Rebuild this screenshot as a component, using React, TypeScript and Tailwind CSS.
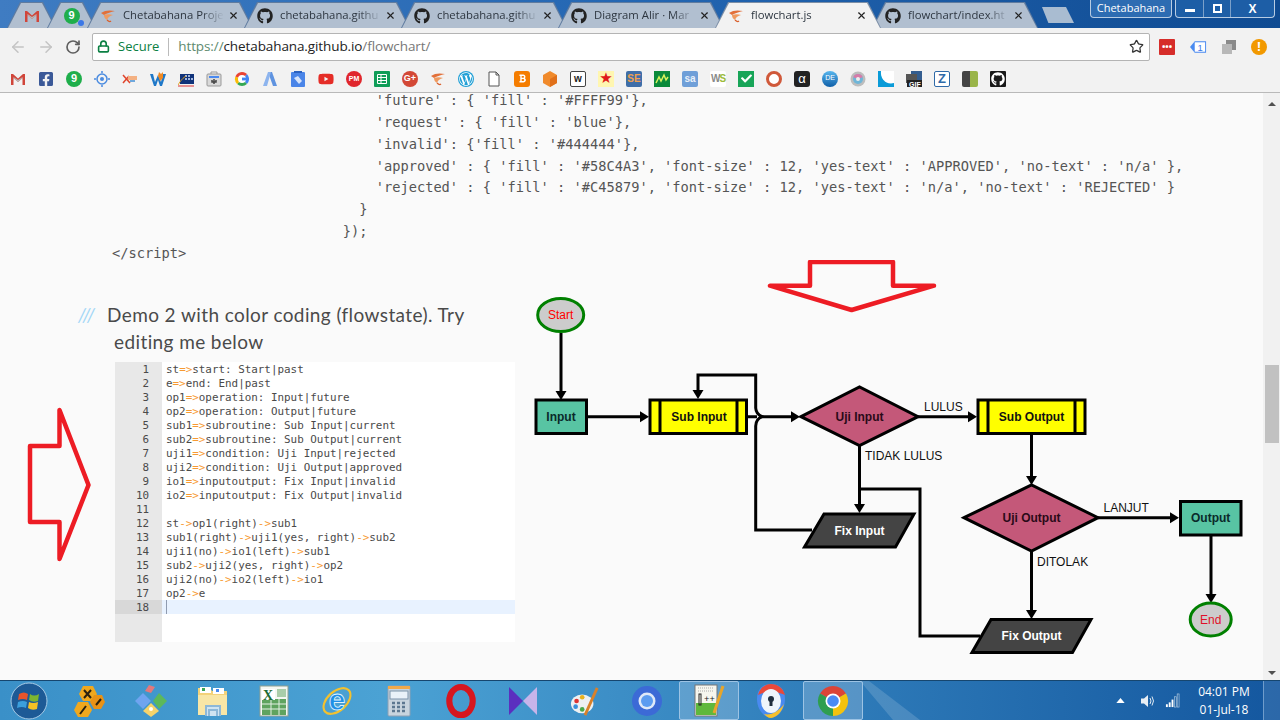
import type { ReactNode } from "react";
import { ArrowLeft, ArrowRight, RotateCw, Star, Lock, X } from "lucide-react";
import { FaGithub, FaFacebookSquare, FaWordpressSimple, FaYoutube, FaBold, FaCheck } from "react-icons/fa";

const SANS = "font-['Open_Sans','Noto_Sans',sans-serif]";

function sector(cx: number, cy: number, r: number, a0: number, a1: number) {
  const rad = (a: number) => (a * Math.PI) / 180;
  const x0 = cx + r * Math.cos(rad(a0));
  const y0 = cy + r * Math.sin(rad(a0));
  const x1 = cx + r * Math.cos(rad(a1));
  const y1 = cy + r * Math.sin(rad(a1));
  return `M${cx} ${cy} L${x0} ${y0} A${r} ${r} 0 0 1 ${x1} ${y1} Z`;
}

function Shrimp() {
  return (
    <svg viewBox="0 0 16 16" className="w-4 h-4 shrink-0">
      <path d="M1 5 C5 2 10 2 15 3 C11 4 7 5 4 7 Z" fill="#e2703a" />
      <path d="M4 7 C7 6 10 6 13 7 C10 8 8 9 7 12 C5 11 4 9 4 7 Z" fill="#ef9a5f" />
      <path d="M7 12 C8 13 10 14 11 13" stroke="#d9602c" fill="none" strokeWidth="1.2" />
    </svg>
  );
}

function GmailM({ size = 16 }: { size?: number }) {
  return (
    <svg viewBox="0 0 16 16" width={size} height={size} className="shrink-0">
      <path d="M1 3 H3 L8 7.5 L13 3 H15 V14 H12.5 V7 L8 11 L3.5 7 V14 H1 Z" fill="#d0453a" />
      <path d="M3.5 7 L8 11 L12.5 7 V6 L8 9 L3.5 6 Z" fill="#b9b9b9" />
    </svg>
  );
}

function WaIcon({ size = 16 }: { size?: number }) {
  return (
    <span
      style={{ width: size, height: size }}
      className="flex items-center justify-center shrink-0 rounded-full bg-[#1fae4b] text-white text-[11px] font-bold font-['Liberation_Sans',sans-serif] leading-none"
    >
      9
    </span>
  );
}

function Letter({ bg, color, children, cls = "" }: { bg: string; color: string; children: ReactNode; cls?: string }) {
  return (
    <span
      style={{ background: bg, color }}
      className={`flex items-center justify-center w-4 h-4 rounded-[2px] text-[10px] font-bold leading-none font-['Liberation_Sans',sans-serif] ${cls}`}
    >
      {children}
    </span>
  );
}

function Tab({ icon, title, active = false, pinned = false }: { icon: ReactNode; title?: string; active?: boolean; pinned?: boolean }) {
  const clip = "[clip-path:polygon(0_100%,13px_0,calc(100%-13px)_0,100%_100%)]";
  return (
    <div className={`relative h-[26px] -mr-[9px] ${pinned ? "w-[49px]" : "w-[166px]"} ${active ? "z-10 bg-[#7d8fa6]" : "bg-[#5f7b9f]"} ${clip}`}>
      <div className={`absolute inset-x-[1px] top-[1px] bottom-0 flex items-center ${active ? "bg-[#f2f2f2]" : "bg-[#b1bfd0]"} ${clip}`}>
        {pinned ? (
          <div className="mx-auto flex">{icon}</div>
        ) : (
          <>
            <div className="ml-[12px] flex">{icon}</div>
            <div className="ml-[7px] w-[101px] overflow-hidden whitespace-nowrap text-[11.3px] text-[#2d3640] [mask-image:linear-gradient(to_right,black_78%,transparent)]">
              {title}
            </div>
            <X size={11} strokeWidth={2.5} className="ml-[4px] text-[#222]" />
          </>
        )}
      </div>
    </div>
  );
}

const gh = <FaGithub size={16} className="text-[#222]" />;

function TabBar() {
  return (
    <div className={`relative h-[28px] pt-[2px] pl-[7px] flex bg-gradient-to-r from-[#3f7cc2] via-[#2366b2] to-[#0f4b92] ${SANS}`}>
      <Tab pinned icon={<GmailM />} />
      <Tab pinned icon={<span className="relative"><WaIcon /><span className="absolute -right-1 -bottom-0.5 w-[6px] h-[6px] rounded-full bg-[#3b78e7]" /></span>} />
      <Tab icon={<Shrimp />} title="Chetabahana Proje" />
      <Tab icon={gh} title="chetabahana.githu" />
      <Tab icon={gh} title="chetabahana.githu" />
      <Tab icon={gh} title="Diagram Alir · Mar" />
      <Tab active icon={<Shrimp />} title="flowchart.js" />
      <Tab icon={gh} title="flowchart/index.ht" />
      <div className="ml-[13px] mt-[5px] w-[32px] h-[16px] bg-[#a9bcd1] [clip-path:polygon(0_0,75%_0,100%_100%,20%_100%)]" />
      <div className="ml-auto flex h-[18px] -mt-[2px] mr-[5px] text-white">
        <div className="w-[82px] flex items-center justify-center border border-t-0 border-[#b7cce3] rounded-b-[4px] bg-[#2d6cb2] text-[11px]">Chetabahana</div>
        <div className="ml-[3px] flex border border-t-0 border-[#b7cce3] rounded-b-[4px] bg-[#1d5ea6]">
          <div className="w-[28px] flex items-center justify-center border-r border-[#7ba0c9]"><span className="w-[10px] h-[3px] mt-[3px] bg-white" /></div>
          <div className="w-[27px] flex items-center justify-center border-r border-[#7ba0c9]"><span className="w-[9px] h-[9px] border-2 border-white" /></div>
          <div className="w-[43px] flex items-center justify-center text-[12px] font-bold font-['Liberation_Sans',sans-serif]">X</div>
        </div>
      </div>
    </div>
  );
}

function AddressBar() {
  return (
    <div className={`h-[37px] flex items-center bg-[#f2f2f2] ${SANS}`}>
      <ArrowLeft size={18} className="ml-[9px] text-[#c4c4c4]" />
      <ArrowRight size={18} className="ml-[10px] text-[#c4c4c4]" />
      <RotateCw size={16} strokeWidth={2.5} className="ml-[10px] text-[#5f5f5f]" />
      <div className="ml-[11px] w-[1058px] h-[28px] flex items-center bg-white border border-[#b4b4b4] rounded-[2px]">
        <Lock size={13} strokeWidth={3} className="ml-[4px] text-[#0b8043]" />
        <span className="ml-[8px] text-[13px] text-[#0b8043]">Secure</span>
        <span className="ml-[9px] w-px h-[18px] bg-[#bbb]" />
        <span className="ml-[9px] text-[13.5px] tracking-[-0.1px]">
          <span className="text-[#5d8a6e]">https://</span>
          <span className="text-[#222]">chetabahana.github.io</span>
          <span className="text-[#777]">/flowchart/</span>
        </span>
        <Star size={15} strokeWidth={2} className="ml-auto mr-[5px] text-[#333]" />
      </div>
      <div className="ml-[9px] w-[16px] h-[16px] bg-[#d62d2a] rounded-[1px] flex items-center justify-center text-white text-[9px] font-bold leading-none">•••</div>
      <svg viewBox="0 0 18 16" className="ml-[15px] w-[17px] h-[16px]">
        <path d="M0 8 L5 2 H17 V14 H5 Z" fill="#4a8af0" />
        <rect x="5" y="3" width="11" height="10" fill="#fff" />
        <text x="8" y="12" fontSize="10" fill="#3b78e7" fontFamily="Liberation Sans">1</text>
      </svg>
      <svg viewBox="0 0 16 16" className="ml-[14px] w-4 h-4">
        <rect x="5" y="1" width="10" height="10" fill="#8a8a8a" />
        <rect x="1" y="5" width="10" height="10" fill="#b8b8b8" />
      </svg>
      <div className="ml-[14px] w-[16px] h-[16px] rounded-full bg-[#f29900] flex items-center justify-center text-white text-[12px] font-bold leading-none">!</div>
    </div>
  );
}

function Bookmarks() {
  const g = (
    <svg viewBox="0 0 16 16" className="w-4 h-4">
      <path d={sector(8, 8, 7, -45, 45)} fill="#4285f4" />
      <path d={sector(8, 8, 7, 45, 135)} fill="#34a853" />
      <path d={sector(8, 8, 7, 135, 200)} fill="#fbbc05" />
      <path d={sector(8, 8, 7, 200, 315)} fill="#ea4335" />
      <circle cx="8" cy="8" r="4" fill="#fff" />
      <rect x="8" y="6.6" width="7" height="2.8" fill="#4285f4" />
    </svg>
  );
  const items: ReactNode[] = [
    <GmailM />,
    <FaFacebookSquare size={16} className="text-[#3b5998]" />,
    <WaIcon />,
    <svg viewBox="0 0 16 16" className="w-4 h-4"><circle cx="8" cy="8" r="5" fill="none" stroke="#4a8be0" strokeWidth="1.5" /><circle cx="8" cy="8" r="2" fill="#4a8be0" /><path d="M0 8h2M14 8h2M8 0v2M8 14v2" stroke="#4a8be0" strokeWidth="1.5" /></svg>,
    <svg viewBox="0 0 16 16" className="w-4 h-4"><path d="M1 4 L8 12 M1 12 L7 5" stroke="#e0452c" strokeWidth="1.5" /><rect x="6" y="5" width="9" height="4" fill="#f4b183" /><rect x="8" y="9" width="5" height="2" fill="#6fa8dc" /></svg>,
    <svg viewBox="0 0 16 16" className="w-4 h-4"><path d="M0 3 L3 3 L5 11 L8 4 L11 11 L13 3 L16 3 L12 15 L10 15 L8 9 L6 15 L4 15 Z" fill="#1f78c8" /><path d="M8 5 L9 1 L11 3 L13 1 L13 7 L10 10 Z" fill="#f08a24" /></svg>,
    <svg viewBox="0 0 16 16" className="w-4 h-4"><rect x="2" y="3" width="14" height="10" fill="#10337a" /><path d="M7 5h2M10 5h2M7 8h2M10 8h2M13 8h2" stroke="#cfe2ff" strokeWidth="1.5" /><path d="M0 14 C3 9 5 7 8 5" stroke="#e0a020" fill="none" /><path d="M0 15 H16" stroke="#d33" /></svg>,
    <svg viewBox="0 0 16 16" className="w-4 h-4"><path d="M5 3 V1 H11 V3" fill="none" stroke="#999" /><rect x="1" y="3" width="14" height="12" rx="1" fill="#d9d9d9" stroke="#999" /><rect x="3" y="5" width="10" height="2" fill="#4a8af0" /><path d="M8 8 V13 M6 9 V11 H10 V9" stroke="#444" strokeWidth="1.5" fill="none" /></svg>,
    g,
    <svg viewBox="0 0 16 16" className="w-4 h-4"><path d="M6 1 H10 L15 15 H11 Z" fill="#5f93e0" /><path d="M6 1 H9 L5 15 H1 Z" fill="#8db4ee" /></svg>,
    <svg viewBox="0 0 16 16" className="w-4 h-4"><rect x="1" y="1" width="14" height="15" rx="1" fill="#4a85e8" /><rect x="4" y="0" width="8" height="2" fill="#2b62c0" /><path d="M4 7 L8 5 L12 10 L9 13 Z" fill="#d6e4fb" /></svg>,
    <FaYoutube size={16} className="text-[#e52d27]" />,
    <span className="w-4 h-4 rounded-full bg-[#e0262c] text-white text-[7px] font-bold flex items-center justify-center leading-none font-['Liberation_Sans',sans-serif]">PM</span>,
    <svg viewBox="0 0 16 16" className="w-4 h-4"><rect width="16" height="16" rx="1" fill="#0f9d58" /><path d="M3.5 3.5 H12.5 V12.5 H3.5 Z M3.5 6.5 H12.5 M3.5 9.5 H12.5 M7 3.5 V12.5" stroke="#fff" fill="none" /></svg>,
    <span className="w-4 h-4 rounded-full bg-[#d34836] text-white text-[9px] font-bold flex items-center justify-center leading-none font-['Liberation_Sans',sans-serif]">G+</span>,
    <Shrimp />,
    <span className="w-4 h-4 rounded-full bg-[#21a0d6] flex items-center justify-center"><FaWordpressSimple size={14} className="text-white" /></span>,
    <svg viewBox="0 0 16 16" className="w-4 h-4"><path d="M3 1 H10 L13 4 V15 H3 Z M10 1 V4 H13" fill="#fff" stroke="#555" /></svg>,
    <span className="w-4 h-4 rounded-[3px] bg-[#f57d00] flex items-center justify-center"><FaBold size={9} className="text-white" /></span>,
    <svg viewBox="0 0 16 16" className="w-4 h-4"><path d="M8 0 L15 4 V12 L8 16 L1 12 V4 Z" fill="#f08a2b" /><path d="M8 8 L15 4 V12 L8 16 Z" fill="#e0701a" /></svg>,
    <Letter bg="#fff" color="#222" cls="border border-[#444]">w</Letter>,
    <span className="w-4 h-4 bg-[#fff6b0] flex items-center justify-center text-[#e01b1b] text-[15px] leading-none font-['DejaVu_Sans',sans-serif]">★</span>,
    <Letter bg="#3f6ea8" color="#f0a050">SE</Letter>,
    <svg viewBox="0 0 16 16" className="w-4 h-4"><rect width="16" height="16" fill="#0a8a3a" /><path d="M2 12 L5 6 L7 10 L10 4 L12 9 L14 6" stroke="#d7f25c" fill="none" strokeWidth="1.5" /></svg>,
    <Letter bg="#6f9fd8" color="#e8f0fa">sa</Letter>,
    <Letter bg="#fff" color="#8a8a8a" cls="tracking-[-1px]"><span>W</span><span className="text-[#9bbb3a]">S</span></Letter>,
    <span className="w-4 h-4 bg-[#18a558] flex items-center justify-center"><FaCheck size={11} className="text-white" /></span>,
    <span className="w-4 h-4 rounded-full border-[3px] border-[#d0593a] bg-white" />,
    <Letter bg="#222" color="#fff" cls="!text-[13px] !font-normal rounded-[3px]">α</Letter>,
    <span className="w-4 h-4 rounded-full bg-gradient-to-b from-[#58b7ee] to-[#0d5fa8] text-white text-[7px] flex items-center justify-center font-['Liberation_Sans',sans-serif]">DE</span>,
    <svg viewBox="0 0 16 16" className="w-4 h-4"><circle cx="8" cy="8" r="7.5" fill="#bdbdbd" /><circle cx="8" cy="8" r="5" fill="#6fb6d8" /><path d={sector(8, 8, 5, 200, 340)} fill="#d77ba8" /><circle cx="8" cy="8" r="2" fill="#eee" /></svg>,
    <svg viewBox="0 0 16 16" className="w-4 h-4"><rect width="16" height="16" fill="#0a9bd8" /><path d="M3 0 C2 8 8 14 16 12 V0 Z" fill="#fff" /></svg>,
    <svg viewBox="0 0 16 16" className="w-4 h-4"><rect x="5" y="0" width="11" height="9" fill="#335d8f" /><rect x="0" y="3" width="11" height="9" fill="#555" /><rect x="1" y="9" width="15" height="7" fill="#222" /><text x="3" y="15.5" fontSize="7" fontWeight="bold" fill="#fff" fontFamily="Liberation Sans">GIF</text></svg>,
    <Letter bg="#fff" color="#2f6aa8" cls="border border-[#2f6aa8] !text-[13px]">Z</Letter>,
    <span className="w-4 h-4 rounded-[2px] bg-gradient-to-r from-[#444] from-50% to-[#9ab54a] to-50%" />,
    <span className="w-4 h-4 bg-[#1a1a1a] rounded-[1px] flex items-center justify-center"><FaGithub size={14} className="text-white" /></span>,
  ];
  return (
    <div className="h-[28px] flex items-center gap-3 pl-[10px] bg-[#f2f2f2] border-b border-[#b9b9b9]">
      {items.map((item, i) => (
        <div key={i} className="w-4 h-4 flex items-center justify-center">{item}</div>
      ))}
    </div>
  );
}

const topCode = `                                'future' : { 'fill' : '#FFFF99'},
                                'request' : { 'fill' : 'blue'},
                                'invalid': {'fill' : '#444444'},
                                'approved' : { 'fill' : '#58C4A3', 'font-size' : 12, 'yes-text' : 'APPROVED', 'no-text' : 'n/a' },
                                'rejected' : { 'fill' : '#C45879', 'font-size' : 12, 'yes-text' : 'n/a', 'no-text' : 'REJECTED' }
                              }
                            });
</script>`;

const editorLines = [
  "st=>start: Start|past",
  "e=>end: End|past",
  "op1=>operation: Input|future",
  "op2=>operation: Output|future",
  "sub1=>subroutine: Sub Input|current",
  "sub2=>subroutine: Sub Output|current",
  "uji1=>condition: Uji Input|rejected",
  "uji2=>condition: Uji Output|approved",
  "io1=>inputoutput: Fix Input|invalid",
  "io2=>inputoutput: Fix Output|invalid",
  "",
  "st->op1(right)->sub1",
  "sub1(right)->uji1(yes, right)->sub2",
  "uji1(no)->io1(left)->sub1",
  "sub2->uji2(yes, right)->op2",
  "uji2(no)->io2(left)->io1",
  "op2->e",
  "",
];

function Editor() {
  return (
    <div className="ml-[37px] w-[400px] h-[280px] flex bg-white font-['DejaVu_Sans_Mono',monospace] text-[10.9px] leading-[16px] text-[#4a4a4a]">
      <div className="w-[47px] bg-[#e8e8e8] text-right">
        {editorLines.map((_, i) => (
          <div key={i} className={`pr-[13px] h-[14px] ${i === 17 ? "bg-[#d8d8d8]" : ""}`}>{i + 1}</div>
        ))}
      </div>
      <div className="flex-1">
        {editorLines.map((line, i) => (
          <div key={i} className={`pl-[4px] h-[14px] whitespace-pre ${i === 17 ? "bg-[#e8f2ff]" : ""}`}>
            {i === 17 && <div className="w-px h-[14px] bg-[#8f9bb0]" />}
            {line.split(/(=>|->)/).map((part, j) =>
              part === "=>" || part === "->" ? <span key={j} className="text-[#f79a32]">{part}</span> : part
            )}
          </div>
        ))}
      </div>
    </div>
  );
}

function HeadR({ x, y }: { x: number; y: number }) {
  return <polygon points={`${x - 9},${y - 5.5} ${x},${y} ${x - 9},${y + 5.5}`} fill="#000" />;
}

function HeadD({ x, y }: { x: number; y: number }) {
  return <polygon points={`${x - 5.5},${y - 9} ${x},${y} ${x + 5.5},${y - 9}`} fill="#000" />;
}

function Flowchart() {
  const node = { fontSize: 12, textAnchor: "middle" as const, dominantBaseline: "central" as const, fontWeight: 700 };
  const label = { fontSize: 12, fill: "#111" };
  const line = { stroke: "#000", strokeWidth: 3, fill: "none" };
  return (
    <svg viewBox="525 293 730 387" className="w-[730px] h-[387px] shrink-0 font-['Liberation_Sans',sans-serif]">
      <path d="M561 333 V392" {...line} />
      <HeadD x={561} y={400} />
      <path d="M587 416.7 H640" {...line} />
      <HeadR x={649} y={416.7} />
      <path d="M747 416.7 H757 M761 416.7 H792" {...line} />
      <HeadR x={800} y={416.7} />
      <path d="M698 391 V375 H755.7 V408 Q756 414 762 416.7 Q756 419 755.7 426 V530 H812" {...line} />
      <HeadD x={698} y={399} />
      <path d="M918 416.7 H968" {...line} />
      <HeadR x={977} y={416.7} />
      <path d="M859.5 446 V504" {...line} />
      <HeadD x={859.5} y={513} />
      <path d="M860 489 H920 V636 H980" {...line} />
      <path d="M1031.5 434 V476" {...line} />
      <HeadD x={1031.5} y={485} />
      <path d="M1098 517.7 H1170" {...line} />
      <HeadR x={1179} y={517.7} />
      <path d="M1031.5 551 V610" {...line} />
      <HeadD x={1031.5} y={619} />
      <path d="M1211 536 V594" {...line} />
      <HeadD x={1211} y={603} />

      <ellipse cx={560.7} cy={315} rx={23} ry={16.5} fill="#ccc" stroke="#008000" strokeWidth={3} />
      <text x={560.7} y={315} fontSize={12} textAnchor="middle" dominantBaseline="central" fill="#ff0000">Start</text>

      <rect x={536} y={400} width={50.5} height={33.5} fill="#58C4A3" stroke="#000" strokeWidth={3} />
      <text x={561} y={416.7} {...node} fill="#0a2a2a">Input</text>

      <rect x={650} y={400} width={96.5} height={33.5} fill="#ffff00" stroke="#000" strokeWidth={3} />
      <path d="M660 400 V433.5 M737 400 V433.5" stroke="#000" strokeWidth={3} />
      <text x={699} y={416.7} {...node} fill="#111">Sub Input</text>

      <polygon points="801,416.7 859.5,387 918,416.7 859.5,445.7" fill="#C45879" stroke="#000" strokeWidth={3} />
      <text x={859.5} y={416.7} {...node} fill="#2a0a18">Uji Input</text>

      <rect x={978} y={400} width={107} height={33.5} fill="#ffff00" stroke="#000" strokeWidth={3} />
      <path d="M988 400 V433.5 M1075 400 V433.5" stroke="#000" strokeWidth={3} />
      <text x={1031.5} y={416.7} {...node} fill="#111">Sub Output</text>

      <polygon points="964,517.7 1031.5,485 1098,517.7 1031.5,551" fill="#C45879" stroke="#000" strokeWidth={3} />
      <text x={1031.5} y={517.7} {...node} fill="#2a0a18">Uji Output</text>

      <rect x={1180.5} y={501.5} width={60.5} height={33.5} fill="#58C4A3" stroke="#000" strokeWidth={3} />
      <text x={1210.7} y={517.7} {...node} fill="#0a2a2a">Output</text>

      <polygon points="824,514 914,514 895.5,547 804.5,547" fill="#444444" stroke="#000" strokeWidth={3} />
      <text x={859.5} y={530.5} {...node} fill="#fff">Fix Input</text>

      <polygon points="991,619.5 1091,619.5 1072.5,652.5 972,652.5" fill="#444444" stroke="#000" strokeWidth={3} />
      <text x={1031.5} y={636} {...node} fill="#fff">Fix Output</text>

      <ellipse cx={1210.7} cy={619.5} rx={20.5} ry={16.5} fill="#ccc" stroke="#008000" strokeWidth={3} />
      <text x={1210.7} y={619.5} fontSize={12} textAnchor="middle" dominantBaseline="central" fill="#e0102a">End</text>

      <text x={924} y={411} {...label}>LULUS</text>
      <text x={865} y={459.5} {...label}>TIDAK LULUS</text>
      <text x={1103.5} y={512} {...label}>LANJUT</text>
      <text x={1037} y={566} {...label}>DITOLAK</text>
    </svg>
  );
}

function ScrollBar() {
  return (
    <div className="absolute right-0 inset-y-0 w-[17px] bg-[#f1f1f1] flex flex-col items-center">
      <div className="mt-[9px] w-0 h-0 border-x-[4px] border-x-transparent border-b-[4px] border-b-[#505050]" />
      <div className="mt-[259px] w-[14px] h-[78px] bg-[#c1c1c1]" />
      <div className="mt-auto mb-[5px] w-0 h-0 border-x-[4px] border-x-transparent border-t-[4px] border-t-[#505050]" />
    </div>
  );
}

function Page() {
  return (
    <div className="relative h-[587px] overflow-hidden bg-[#fafafa]">
      <pre className="-mt-[3px] pl-[112px] h-[175px] font-['DejaVu_Sans_Mono',monospace] text-[13.7px] leading-[21.85px] text-[#555]">{topCode}</pre>
      <div className="mt-[28px] flex">
        <div className="ml-[78px] w-[447px] shrink-0">
          <div className="pt-[8px] h-[69px] pl-[36px] -indent-[36px] text-[19px] leading-[27px] text-[#4a4a4a] font-['Lato',sans-serif] tracking-[0.4px]">
            <span className="inline-block indent-0 w-[29px] text-[#a3d7f7] italic">///</span>
            Demo 2 with color coding (flowstate). Try
            <br />
            editing me below
          </div>
          <Editor />
        </div>
        <Flowchart />
      </div>
      <svg viewBox="0 0 100 160" className="absolute left-0 top-[314px] w-[100px] h-[160px]">
        <polygon points="59.5,3 59.5,39 30,39 30,115 59.5,115 59.5,152 88.5,78" fill="none" stroke="#ed1c24" strokeWidth={4.5} strokeLinejoin="round" />
      </svg>
      <svg viewBox="760 260 180 55" className="absolute left-[760px] top-[167px] w-[180px] h-[55px]">
        <polygon points="810,262 893,262 893,285.7 934,285.7 851.6,310 770,285.7 810,285.7" fill="none" stroke="#ed1c24" strokeWidth={4.5} strokeLinejoin="round" />
      </svg>
      <ScrollBar />
    </div>
  );
}

function Slot({ children, active = false }: { children: ReactNode; active?: boolean }) {
  return (
    <div className={`w-[62px] flex items-center justify-center ${active ? "relative" : ""}`}>
      {active && <div className="absolute inset-y-[0px] inset-x-[1px] border border-[#9cc3e4] rounded-[2px] bg-white/20" />}
      <div className="relative flex">{children}</div>
    </div>
  );
}

function Taskbar() {
  const chrome = (
    <svg viewBox="0 0 32 32" className="w-[32px] h-[32px]">
      <path d={sector(16, 16, 15, -150, -30)} fill="#db4437" />
      <path d={sector(16, 16, 15, 90, 210)} fill="#2e9e4f" />
      <path d={sector(16, 16, 15, -30, 90)} fill="#f4c20d" />
      <circle cx="16" cy="16" r="7.5" fill="#fff" />
      <circle cx="16" cy="16" r="5.8" fill="#4a8af4" />
    </svg>
  );
  return (
    <div className={`relative h-[40px] overflow-hidden flex border-t border-[#16466f] bg-gradient-to-r from-[#3a90c8] via-[#4ba2d4] via-30% to-[#14579f] ${SANS}`}>
      <div className="absolute left-[860px] top-0 w-[60px] h-full bg-white/15 [clip-path:polygon(0_0,15%_0,100%_100%,55%_100%)]" />
      <div className="w-[58px] relative flex items-center justify-center">
        <svg viewBox="0 0 38 38" className="w-[38px] h-[38px]">
          <circle cx="19" cy="19" r="18" fill="#1d5a96" stroke="#a7cbe6" />
          <path d="M9 12 Q14 9 18 12 L17 18 Q13 16 8 18 Z" fill="#e8542b" />
          <path d="M20 12 Q24 15 29 12 L28 19 Q23 21 19 18 Z" fill="#7db52f" />
          <path d="M8 20 Q13 18 17 20 L16 26 Q12 24 7 26 Z" fill="#3b9fdc" />
          <path d="M19 20 Q23 22 28 20 L27 27 Q22 29 18 26 Z" fill="#f5c124" />
        </svg>
      </div>
      <Slot>
        <svg viewBox="0 0 32 32" className="w-[32px] h-[32px]">
          <polygon points="10,1 20,1 24,9 20,16 10,16 6,9" fill="#f0a81e" />
          <polygon points="21,10 29,10 32,17 28,24 21,24 17,17" fill="#e89216" />
          <polygon points="5,17 15,17 19,25 15,32 5,32 1,25" fill="#f0a81e" />
          <path d="M11 5 L18 13 M18 5 L11 13 M23 20 L28 14 M7 29 L13 21" stroke="#2b2210" strokeWidth="2" />
        </svg>
      </Slot>
      <Slot>
        <svg viewBox="0 0 32 32" className="w-[32px] h-[32px]">
          <polygon points="16,16 8,8 0,16 8,24" fill="#6fa4f0" />
          <polygon points="16,8 20,2 14,0 10,6" fill="#e2787c" />
          <polygon points="24,8 32,16 24,24 18,16" fill="#5cb85c" />
          <polygon points="16,18 24,26 16,32 8,26" fill="#f6d36b" />
          <circle cx="16" cy="24" r="2" fill="#fff" />
        </svg>
      </Slot>
      <Slot>
        <svg viewBox="0 0 32 32" className="w-[32px] h-[34px]">
          <path d="M1 3 H13 L15 6 H30 V30 H1 Z" fill="#f3d27a" />
          <rect x="3" y="2" width="11" height="6" fill="#fff" />
          <rect x="16" y="3" width="11" height="6" fill="#fff" />
          <rect x="5" y="3" width="3" height="3" fill="#3aa655" />
          <rect x="19" y="4" width="3" height="3" fill="#4a8af0" />
          <rect x="1" y="10" width="29" height="20" fill="#f8e6a6" />
          <path d="M9 31 V21 H23 V31 M12 31 V25 H20 V31" stroke="#8db8d8" strokeWidth="2" fill="#cfe4f2" />
        </svg>
      </Slot>
      <Slot>
        <svg viewBox="0 0 32 32" className="w-[32px] h-[34px]">
          <rect x="1" y="1" width="28" height="30" fill="#f4f7f2" stroke="#8fa08f" />
          <rect x="3" y="14" width="24" height="16" fill="#5fa35f" />
          <path d="M3 19 H27 M3 24 H27 M12 14 V30 M20 14 V30" stroke="#e6f1e6" />
          <rect x="3" y="4" width="13" height="11" fill="#fff" />
          <text x="4" y="15" fontSize="14" fontWeight="bold" fill="#1d6b30" fontFamily="Liberation Serif">X</text>
          <rect x="18" y="4" width="9" height="8" fill="#a9cda9" />
        </svg>
      </Slot>
      <Slot>
        <svg viewBox="0 0 32 32" className="w-[34px] h-[34px]">
          <ellipse cx="16" cy="16" rx="15" ry="9" transform="rotate(-42 16 16)" fill="none" stroke="#f3c12e" strokeWidth="2" />
          <text x="16" y="24" fontSize="28" fontWeight="bold" textAnchor="middle" fill="#1f8fe6" stroke="#dff2ff" strokeWidth="0.8" fontFamily="Liberation Sans">e</text>
        </svg>
      </Slot>
      <Slot>
        <svg viewBox="0 0 24 32" className="w-[24px] h-[34px]">
          <rect x="1" y="1" width="22" height="30" rx="1" fill="#c8d4de" stroke="#8ca0b4" />
          <rect x="1" y="1" width="22" height="3" fill="#f0a94a" />
          <rect x="3" y="6" width="18" height="8" fill="#e9f2f9" stroke="#7a93aa" />
          <path d="M5 18h3M10 18h3M15 18h3M5 22h3M10 22h3M15 22h3M5 26h3M10 26h3M15 26h3" stroke="#5c7790" strokeWidth="2.5" />
        </svg>
      </Slot>
      <Slot>
        <svg viewBox="0 0 32 36" className="w-[30px] h-[36px]">
          <ellipse cx="16" cy="18" rx="12.5" ry="15" fill="none" stroke="#d6161f" strokeWidth="6.5" />
        </svg>
      </Slot>
      <Slot>
        <svg viewBox="0 0 28 30" className="w-[28px] h-[30px]">
          <polygon points="14,15 28,1 28,29" fill="#c7b4ea" />
          <polygon points="0,1 14,15 0,29" fill="#5b2fbf" />
        </svg>
      </Slot>
      <Slot>
        <svg viewBox="0 0 32 34" className="w-[30px] h-[34px]">
          <ellipse cx="13" cy="20" rx="12" ry="10" fill="#eef0f2" />
          <circle cx="7" cy="17" r="2.5" fill="#d33" />
          <circle cx="13" cy="13" r="2.5" fill="#e8b21c" />
          <circle cx="6" cy="23" r="2.5" fill="#3a8fdc" />
          <circle cx="13" cy="26" r="2.5" fill="#4aa84a" />
          <path d="M16 32 L29 3" stroke="#d9812a" strokeWidth="3" />
        </svg>
      </Slot>
      <Slot>
        <svg viewBox="0 0 32 32" className="w-[32px] h-[32px]">
          <circle cx="16" cy="16" r="15" fill="#3c6ad6" />
          <circle cx="16" cy="16" r="8.5" fill="#dfe9f8" />
          <circle cx="16" cy="16" r="6" fill="#5c9cf0" />
        </svg>
      </Slot>
      <Slot active>
        <svg viewBox="0 0 32 36" className="w-[32px] h-[36px]">
          <rect x="2" y="2" width="22" height="31" fill="#f6f6ee" stroke="#777" />
          <rect x="3" y="20" width="20" height="12" fill="#5fb83c" />
          <path d="M5 5h16M5 8h16" stroke="#aaa" strokeDasharray="1 1" />
          <text x="11" y="19" fontSize="9" fill="#222" fontFamily="Liberation Mono">++</text>
          <rect x="6" y="11" width="2" height="11" fill="none" stroke="#222" />
          <path d="M21 30 L30 3" stroke="#e8a52a" strokeWidth="3" />
        </svg>
      </Slot>
      <Slot>
        <svg viewBox="0 0 32 36" className="w-[32px] h-[36px]">
          <path d="M16 1 C24 1 30 6 30 16 C30 27 23 34 16 35 C9 34 2 27 2 16 C2 6 8 1 16 1 Z" fill="#4a8af0" />
          <path d="M3 12 C5 5 10 1 16 1 C23 1 28 5 30 12 C22 8 10 8 3 12 Z" fill="#e9493a" />
          <path d="M9 31 C16 33 24 28 29 21 C27 29 22 34 16 35 C13 35 11 33 9 31 Z" fill="#f6c02c" />
          <ellipse cx="16" cy="18" rx="10" ry="12" fill="#eef4fb" />
          <circle cx="16" cy="16" r="3" fill="#1f2d3d" />
          <rect x="14.5" y="17" width="3" height="6" fill="#1f2d3d" />
        </svg>
      </Slot>
      <Slot active>{chrome}</Slot>
      <div className="ml-auto flex items-center text-white">
        <svg viewBox="0 0 10 6" className="w-[9px] h-[5px] mr-[15px]"><path d="M0 6 L5 0 L10 6 Z" fill="#fff" /></svg>
        <svg viewBox="0 0 16 16" className="w-[16px] h-[16px] mr-[9px]">
          <path d="M1 5.5 H4 L8 2 V14 L4 10.5 H1 Z" fill="#e8eef4" />
          <path d="M10 5 Q12 8 10 11 M12 3.5 Q15 8 12 12.5" stroke="#dfe9f2" fill="none" />
        </svg>
        <svg viewBox="0 0 16 16" className="w-[15px] h-[15px] mr-[14px]">
          <rect x="1" y="12" width="2" height="3" fill="#fff" />
          <rect x="4" y="10" width="2" height="5" fill="#fff" />
          <rect x="7" y="7" width="2" height="8" fill="#fff" />
          <rect x="10" y="4" width="2" height="11" fill="none" stroke="#b5cbe0" strokeWidth="0.7" />
          <rect x="13" y="1" width="2" height="14" fill="none" stroke="#b5cbe0" strokeWidth="0.7" />
        </svg>
        <div className="w-[60px] text-center text-[12px] leading-[18px]">
          <div>04:01 PM</div>
          <div>01-Jul-18</div>
        </div>
        <div className="ml-[9px] w-[17px] h-full border-l border-[#6f9ccb] bg-white/10" />
      </div>
    </div>
  );
}

export default function App() {
  return (
    <div className="w-[1280px] h-[720px] overflow-hidden flex flex-col">
      <TabBar />
      <AddressBar />
      <Bookmarks />
      <Page />
      <Taskbar />
    </div>
  );
}
